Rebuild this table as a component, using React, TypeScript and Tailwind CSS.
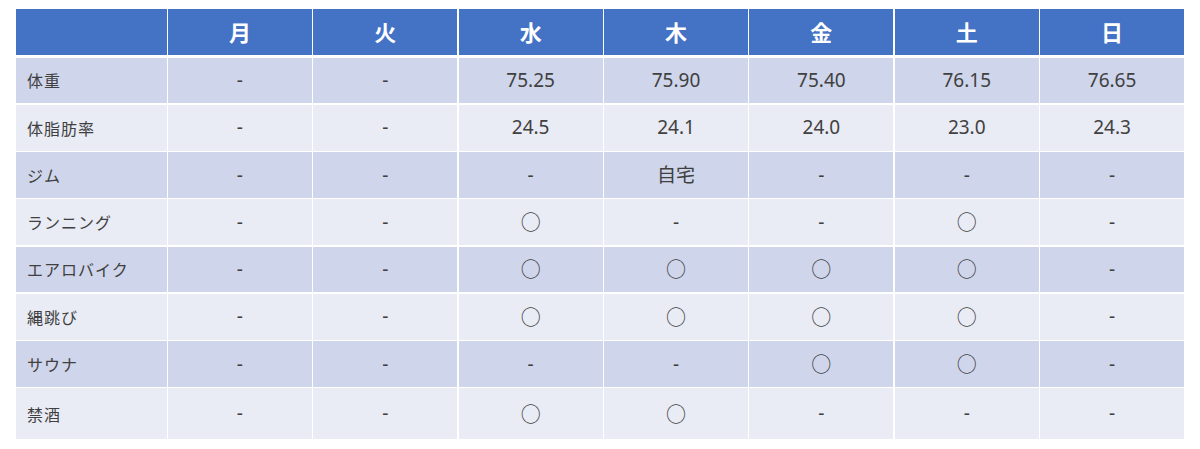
const days = ["月", "火", "水", "木", "金", "土", "日"];

const rows: { label: string; values: string[] }[] = [
  { label: "体重", values: ["-", "-", "75.25", "75.90", "75.40", "76.15", "76.65"] },
  { label: "体脂肪率", values: ["-", "-", "24.5", "24.1", "24.0", "23.0", "24.3"] },
  { label: "ジム", values: ["-", "-", "-", "自宅", "-", "-", "-"] },
  { label: "ランニング", values: ["-", "-", "○", "-", "-", "○", "-"] },
  { label: "エアロバイク", values: ["-", "-", "○", "○", "○", "○", "-"] },
  { label: "縄跳び", values: ["-", "-", "○", "○", "○", "○", "-"] },
  { label: "サウナ", values: ["-", "-", "-", "-", "○", "○", "-"] },
  { label: "禁酒", values: ["-", "-", "○", "○", "-", "-", "-"] },
];

const font = { fontFamily: '"Noto Sans", "Noto Sans CJK JP", sans-serif' };
const jp = { fontFamily: '"Noto Sans CJK JP", sans-serif' };

function Cell({ value }: { value: string }) {
  if (value === "○") {
    return <span className="text-[20px] leading-none text-[#444]" style={jp}>○</span>;
  }
  return <span className="text-[19px] text-[#404040]">{value}</span>;
}

export default function App() {
  return (
    <div className="w-[1200px] h-[449px] bg-white pt-[9px] pl-4" style={font}>
      <div className="w-[1168px] flex flex-col">
        <div className="flex h-[45.5px] gap-[1.5px] mb-[3px]">
          <div className="w-[150.5px] bg-[#4472c4]" />
          {days.map((d) => (
            <div key={d} className="flex-1 bg-[#4472c4] flex items-center justify-center text-white text-[22px] font-bold" style={jp}>
              {d}
            </div>
          ))}
        </div>
        <div className="flex flex-col gap-[1.5px]">
          {rows.map((r, i) => (
            <div key={r.label} className={`flex gap-[1.5px] ${i === rows.length - 1 ? "h-[50.75px]" : "h-[45.75px]"}`}>
              <div
                className={`w-[150.5px] flex items-center pl-[11px] text-[16px] tracking-[1px] text-[#404040] ${i % 2 === 0 ? "bg-[#cfd5ea]" : "bg-[#e9ebf5]"}`}
                style={jp}
              >
                {r.label}
              </div>
              {r.values.map((v, j) => (
                <div key={j} className={`flex-1 flex items-center justify-center ${i % 2 === 0 ? "bg-[#cfd5ea]" : "bg-[#e9ebf5]"}`}>
                  <Cell value={v} />
                </div>
              ))}
            </div>
          ))}
        </div>
      </div>
    </div>
  );
}
